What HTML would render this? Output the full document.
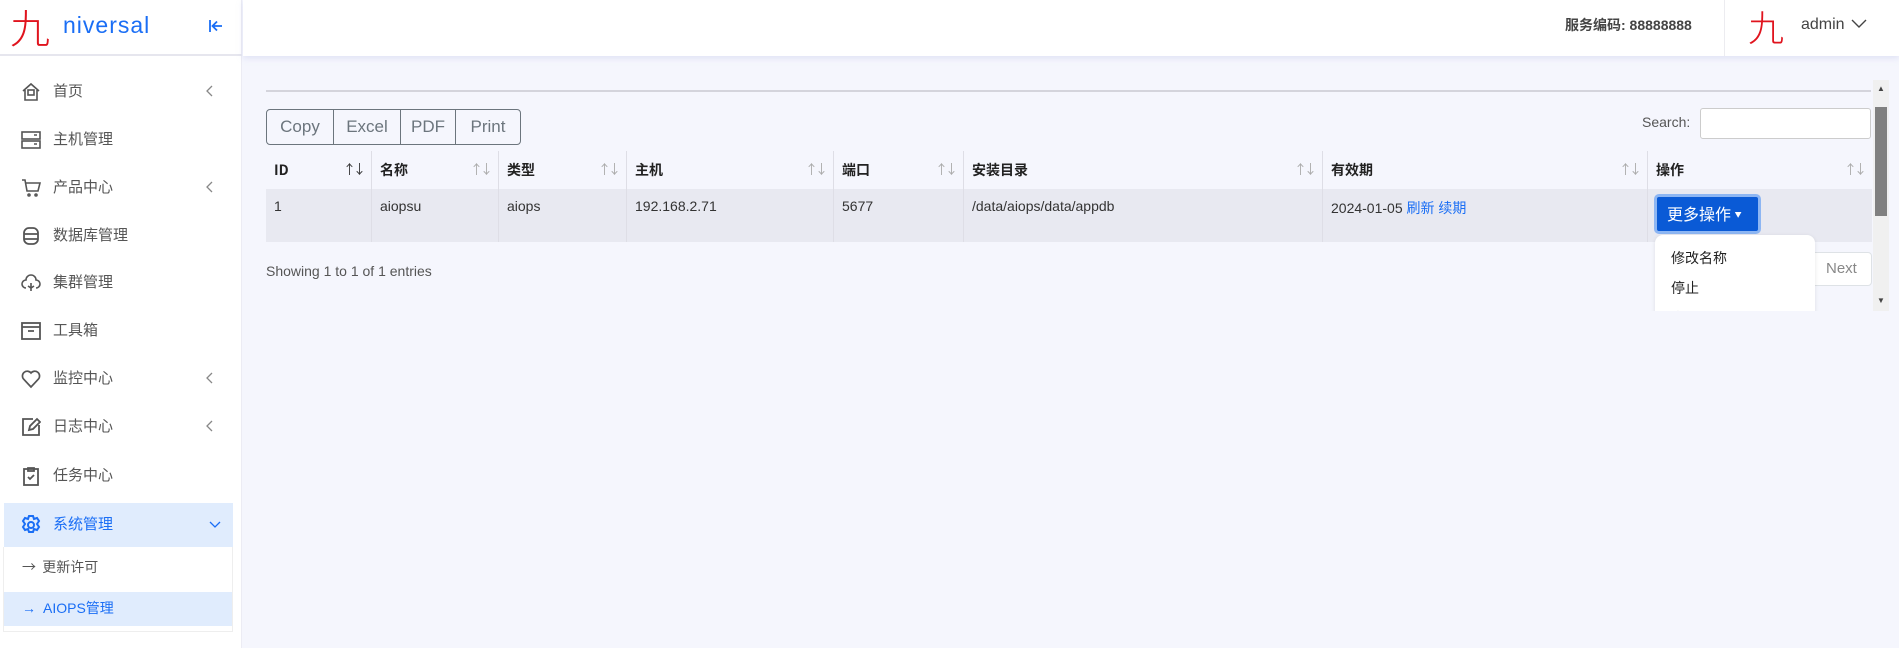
<!DOCTYPE html>
<html><head><meta charset="utf-8"><style>
*{box-sizing:border-box;margin:0;padding:0}
body{width:1899px;height:648px;overflow:hidden;background:#f5f6fd;font-family:"Liberation Sans","Noto Sans CJK SC",sans-serif;position:relative;color:#333}
.side{position:absolute;left:0;top:0;width:242px;height:648px;background:#fff;border-right:1px solid #ececf4}
.logo{position:absolute;left:0;top:0;width:242px;height:56px;border-bottom:2px solid #e6e6ee}
.jiu{position:absolute;color:#e0141e;font-family:"Noto Sans CJK SC",sans-serif;font-weight:300}
.top{position:absolute;left:243px;top:0;right:0;height:56px;background:#fff;box-shadow:0 2px 6px rgba(180,185,230,.35)}
.mi{position:absolute;left:0;width:242px;height:40px;font-size:15px;color:#555;font-family:"Noto Sans CJK SC",sans-serif}
.mi .t{position:absolute;left:53px;top:8px}
.mi svg.i{position:absolute;left:21px;top:10px}
.mi .ch{position:absolute;left:205px;top:12px}
.th{position:absolute;top:71px;height:38px;font-weight:bold;font-size:14px;color:#222;font-family:"Noto Sans CJK SC",sans-serif;padding:9px 8px;border-left:1px solid #dedee6}
.td{position:absolute;top:109px;height:53px;font-size:14px;color:#333;padding:9px 8px;border-left:1px solid #dedee6;font-family:"Liberation Sans","Noto Sans CJK SC",sans-serif}
.ar{position:absolute;right:8px;top:8px;color:#aaa;font-size:13px;letter-spacing:-3px;font-weight:normal}
</style></head><body>
<div class="side">
 <div class="logo">
  <span class="jiu" style="left:10px;top:2px;font-size:40px;line-height:48px">九</span>
  <span style="position:absolute;left:63px;top:12px;font-size:23px;color:#1a6ef5;letter-spacing:1px">niversal</span>
  <svg style="position:absolute;left:208px;top:18px" width="16" height="16" viewBox="0 0 16 16" fill="none" stroke="#1a6ef5" stroke-width="1.8"><path d="M2 2v12M14 8H5M9 3.5L4.5 8 9 12.5"/></svg>
 </div>
 <div class="mi" style="top:72px"><svg class="i" width="20" height="20" viewBox="0 0 20 20" fill="none" stroke="#555" stroke-width="1.6"><path d="M2 9L10 2l8 7M4 8v10h12V8"/><rect x="7" y="8" width="6" height="5"/></svg><span class="t">首页</span><svg class="ch" width="10" height="14" viewBox="0 0 10 14" fill="none" stroke="#888" stroke-width="1.3"><path d="M7 2L2 7l5 5"/></svg></div>
 <div class="mi" style="top:120px"><svg class="i" width="20" height="20" viewBox="0 0 20 20" fill="none" stroke="#555" stroke-width="1.6"><rect x="1" y="2" width="18" height="7"/><rect x="1" y="11" width="18" height="7"/><path d="M13 5h3M13 14h3"/></svg><span class="t">主机管理</span></div>
 <div class="mi" style="top:168px"><svg class="i" width="20" height="20" viewBox="0 0 20 20" fill="none" stroke="#555" stroke-width="1.6"><path d="M1 2h3l2 11h11l2-8H5"/><circle cx="8" cy="17" r="1"/><circle cx="15" cy="17" r="1"/></svg><span class="t">产品中心</span><svg class="ch" width="10" height="14" viewBox="0 0 10 14" fill="none" stroke="#888" stroke-width="1.3"><path d="M7 2L2 7l5 5"/></svg></div>
 <div class="mi" style="top:216px"><svg class="i" width="20" height="20" viewBox="0 0 20 20" fill="none" stroke="#555" stroke-width="1.8"><rect x="3" y="2" width="14" height="16" rx="5"/><path d="M3 8h14M3 13h14"/></svg><span class="t">数据库管理</span></div>
 <div class="mi" style="top:263px"><svg class="i" width="20" height="20" viewBox="0 0 20 20" fill="none" stroke="#555" stroke-width="1.6"><path d="M5 15a4 4 0 010-8 5 5 0 0110 0 4 4 0 010 8M10 10v8M7 13l3 2 3-2"/></svg><span class="t">集群管理</span></div>
 <div class="mi" style="top:311px"><svg class="i" width="20" height="20" viewBox="0 0 20 20" fill="none" stroke="#555" stroke-width="1.8"><rect x="1" y="2" width="18" height="16"/><path d="M1 6h18M7 10h6"/></svg><span class="t">工具箱</span></div>
 <div class="mi" style="top:359px"><svg class="i" width="20" height="20" viewBox="0 0 20 20" fill="none" stroke="#555" stroke-width="1.7"><path d="M10 18L2.5 10A4.5 4.5 0 0110 4a4.5 4.5 0 017.5 6z"/></svg><span class="t">监控中心</span><svg class="ch" width="10" height="14" viewBox="0 0 10 14" fill="none" stroke="#888" stroke-width="1.3"><path d="M7 2L2 7l5 5"/></svg></div>
 <div class="mi" style="top:407px"><svg class="i" width="20" height="20" viewBox="0 0 20 20" fill="none" stroke="#555" stroke-width="1.8"><path d="M12 2H2v16h16V8"/><path d="M8 13l1-4 7-7 3 3-7 7z"/></svg><span class="t">日志中心</span><svg class="ch" width="10" height="14" viewBox="0 0 10 14" fill="none" stroke="#888" stroke-width="1.3"><path d="M7 2L2 7l5 5"/></svg></div>
 <div class="mi" style="top:456px"><svg class="i" width="20" height="20" viewBox="0 0 20 20" fill="none" stroke="#555" stroke-width="1.8"><rect x="3" y="3" width="14" height="16"/><path d="M7 2h6v3H7zM7 11l2 2 4-4"/></svg><span class="t">任务中心</span></div>
 <div style="position:absolute;left:4px;top:503px;width:229px;height:44px;background:#e0ecfd"></div>
 <div class="mi" style="top:505px;color:#1a6ef5"><svg class="i" width="20" height="20" viewBox="0 0 20 20" fill="none" stroke="#1a6ef5" stroke-width="2"><path d="M8 1h4l1 3 3-1 2 3-2 3 2 3-2 3-3-1-1 3H8l-1-3-3 1-2-3 2-3-2-3 2-3 3 1z"/><circle cx="10" cy="10" r="3"/></svg><span class="t">系统管理</span><svg class="ch" style="left:208px;top:15px" width="14" height="10" viewBox="0 0 14 10" fill="none" stroke="#1a6ef5" stroke-width="1.3"><path d="M2 2l5 5 5-5"/></svg></div>
 <div style="position:absolute;left:3px;top:547px;width:230px;height:85px;border:1px solid #eee;border-top:none"></div>
 <div style="position:absolute;left:4px;top:592px;width:228px;height:34px;background:#e0ecfd"></div>
 <div style="position:absolute;left:22px;top:557px;font-size:14px;color:#555;font-family:'Noto Sans CJK SC',sans-serif">→&nbsp; 更新许可</div>
 <div style="position:absolute;left:22px;top:598px;font-size:14px;color:#1a6ef5;font-family:'Liberation Sans','Noto Sans CJK SC',sans-serif">→&nbsp; AIOPS管理</div>
</div>
<div class="top">
 <span style="position:absolute;left:1322px;top:15px;font-size:14px;font-weight:bold;color:#444;font-family:'Liberation Sans','Noto Sans CJK SC',sans-serif">服务编码: 88888888</span>
 <div style="position:absolute;left:1481px;top:0;width:1px;height:56px;background:#ececf0"></div>
 <span class="jiu" style="left:1505px;top:3px;font-size:36px;line-height:46px">九</span>
 <span style="position:absolute;left:1558px;top:16px;font-size:16px;color:#444">admin</span>
 <svg style="position:absolute;left:1608px;top:19px" width="16" height="10" viewBox="0 0 16 10" fill="none" stroke="#444" stroke-width="1.4"><path d="M1 1l7 7 7-7"/></svg>
</div>
<div style="position:absolute;left:243px;top:80px;width:1646px;height:231px;overflow:hidden">
 <div style="position:absolute;left:23px;top:10px;width:1605px;height:2px;background:#d4d4dc"></div>
 <div style="position:absolute;left:23px;top:29px;width:255px;height:36px;border:1px solid #6c757d;border-radius:4px;display:flex;font-size:17px;color:#6c757d">
  <div style="width:67px;text-align:center;line-height:34px;border-right:1px solid #6c757d">Copy</div>
  <div style="width:67px;text-align:center;line-height:34px;border-right:1px solid #6c757d">Excel</div>
  <div style="width:55px;text-align:center;line-height:34px;border-right:1px solid #6c757d">PDF</div>
  <div style="flex:1;text-align:center;line-height:34px">Print</div>
 </div>
 <span style="position:absolute;left:1399px;top:34px;font-size:14px;color:#555">Search:</span>
 <div style="position:absolute;left:1457px;top:28px;width:171px;height:31px;background:#fff;border:1px solid #ccc;border-radius:3px"></div>
 <div style="position:absolute;left:23px;top:109px;width:1606px;height:53px;background:#e8e9f1"></div>
 <div class="th" style="left:23px;width:105px;border-left:none">ID<span class="ar" style="color:#333">↑↓</span></div>
 <div class="th" style="left:128px;width:127px">名称<span class="ar">↑↓</span></div>
 <div class="th" style="left:255px;width:128px">类型<span class="ar">↑↓</span></div>
 <div class="th" style="left:383px;width:207px">主机<span class="ar">↑↓</span></div>
 <div class="th" style="left:590px;width:130px">端口<span class="ar">↑↓</span></div>
 <div class="th" style="left:720px;width:359px">安装目录<span class="ar">↑↓</span></div>
 <div class="th" style="left:1079px;width:325px">有效期<span class="ar">↑↓</span></div>
 <div class="th" style="left:1404px;width:225px">操作<span class="ar">↑↓</span></div>
 <div class="td" style="left:23px;border-left:none">1</div>
 <div class="td" style="left:128px;width:127px">aiopsu</div>
 <div class="td" style="left:255px;width:128px">aiops</div>
 <div class="td" style="left:383px;width:207px">192.168.2.71</div>
 <div class="td" style="left:590px;width:130px">5677</div>
 <div class="td" style="left:720px;width:359px">/data/aiops/data/appdb</div>
 <div class="td" style="left:1079px;width:325px">2024-01-05 <span style="color:#1a6ef5">刷新 续期</span></div>
 <div class="td" style="left:1404px;width:225px"></div>
 <div style="position:absolute;left:1411px;top:114px;width:107px;height:40px;background:#0a5ad6;border:3px solid #8db6f3;border-radius:5px;color:#fff;font-size:16px;line-height:33px;padding-left:10px;font-family:'Noto Sans CJK SC',sans-serif">更多操作 <span style="font-size:7px;vertical-align:3px">▼</span></div>
 <span style="position:absolute;left:23px;top:183px;font-size:14px;color:#555">Showing 1 to 1 of 1 entries</span>
 <div style="position:absolute;left:1570px;top:172px;width:59px;height:34px;background:#fff;border:1px solid #dee2e6;border-radius:0 4px 4px 0;font-size:15px;color:#888;line-height:32px;padding-left:12px">Next</div>
 <div style="position:absolute;left:1412px;top:155px;width:160px;height:100px;background:#fff;border-radius:8px;box-shadow:0 1px 4px rgba(0,0,0,.1);font-size:14px;font-family:'Noto Sans CJK SC',sans-serif;color:#222">
  <div style="position:absolute;left:16px;top:13px">修改名称</div>
  <div style="position:absolute;left:16px;top:43px">停止</div>
  <div style="position:absolute;left:16px;top:73px">启动</div>
 </div>
 <div style="position:absolute;left:1630px;top:0;width:16px;height:231px;background:#f0f0f0"></div>
 <div style="position:absolute;left:1632px;top:27px;width:12px;height:109px;background:#808080"></div>
 <div style="position:absolute;left:1634px;top:4px;font-size:8px;color:#444">▲</div>
 <div style="position:absolute;left:1634px;top:216px;font-size:8px;color:#444">▼</div>
</div>
</body></html>
